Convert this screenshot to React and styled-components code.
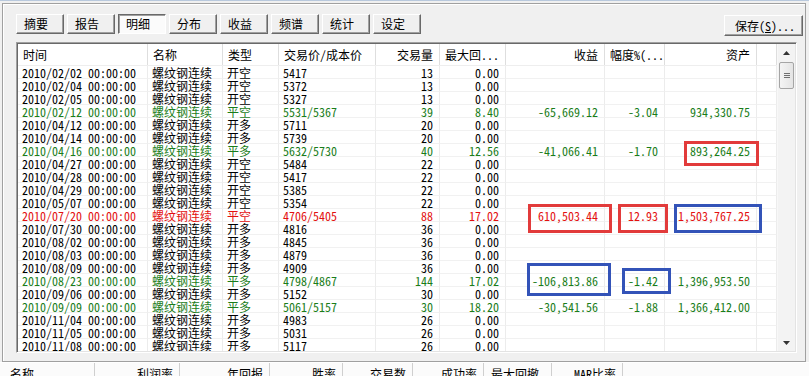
import styled, { createGlobalStyle } from "styled-components";

const GlobalStyle = createGlobalStyle`
  html, body {
    margin: 0;
    padding: 0;
    background: #f0f0f0;
  }
  body {
    font-family: "Noto Sans Mono CJK SC", "Noto Sans CJK SC", monospace;
    font-size: 12px;
    color: #000;
    overflow: hidden;
  }
`;

const TABS = ["摘要", "报告", "明细", "分布", "收益", "频谱", "统计", "设定"];

const COLUMNS = [
  { title: "时间", width: 130, head: "left", cell: "left" },
  { title: "名称", width: 75, head: "left", cell: "left" },
  { title: "类型", width: 56, head: "left", cell: "left" },
  { title: "交易价/成本价", width: 97, head: "left", cell: "left" },
  { title: "交易量", width: 64, head: "right", cell: "right" },
  { title: "最大回...", width: 66, head: "left", cell: "right" },
  { title: "收益", width: 99, head: "right", cell: "right" },
  { title: "幅度%(...", width: 60, head: "left", cell: "right" },
  { title: "资产", width: 92, head: "right", cell: "right" },
];

const GRID = COLUMNS.map((c) => c.width + "px").join(" ") + " 1fr";

const TRADES = [
  ["2010/02/02", "开空", "5417", "13", "0.00"],
  ["2010/02/04", "开空", "5372", "13", "0.00"],
  ["2010/02/05", "开空", "5327", "13", "0.00"],
  ["2010/02/12", "平空", "5531/5367", "39", "8.40", "-65,669.12", "-3.04", "934,330.75", "win"],
  ["2010/04/12", "开多", "5711", "20", "0.00"],
  ["2010/04/14", "开多", "5739", "20", "0.00"],
  ["2010/04/16", "平多", "5632/5730", "40", "12.56", "-41,066.41", "-1.70", "893,264.25", "win"],
  ["2010/04/27", "开空", "5484", "22", "0.00"],
  ["2010/04/28", "开空", "5417", "22", "0.00"],
  ["2010/04/29", "开空", "5385", "22", "0.00"],
  ["2010/05/07", "开空", "5354", "22", "0.00"],
  ["2010/07/20", "平空", "4706/5405", "88", "17.02", "610,503.44", "12.93", "1,503,767.25", "loss"],
  ["2010/07/30", "开多", "4816", "36", "0.00"],
  ["2010/08/02", "开多", "4845", "36", "0.00"],
  ["2010/08/03", "开多", "4879", "36", "0.00"],
  ["2010/08/09", "开多", "4909", "36", "0.00"],
  ["2010/08/23", "平多", "4798/4867", "144", "17.02", "-106,813.86", "-1.42", "1,396,953.50", "win"],
  ["2010/09/06", "开多", "5152", "30", "0.00"],
  ["2010/09/09", "平多", "5061/5157", "30", "18.20", "-30,541.56", "-1.88", "1,366,412.00", "win"],
  ["2010/11/04", "开多", "4983", "26", "0.00"],
  ["2010/11/05", "开多", "5031", "26", "0.00"],
  ["2010/11/08", "开多", "5117", "26", "0.00"],
];

const SUMMARY = [
  { title: "名称", width: 92, align: "left" },
  { title: "利润率", width: 85, align: "right" },
  { title: "年回报", width: 90, align: "right" },
  { title: "胜率", width: 73, align: "right" },
  { title: "交易数", width: 70, align: "right" },
  { title: "成功率", width: 71, align: "right" },
  { title: "最大回撤", width: 68, align: "left" },
  { title: "MAR比率", width: 71, align: "right" },
];

// hand-drawn annotation boxes laid over the list
const MARKS = [
  { color: "red", x: 684, y: 140, w: 75, h: 25 },
  { color: "red", x: 528, y: 203, w: 84, h: 29 },
  { color: "red", x: 618, y: 203, w: 50, h: 29 },
  { color: "blue", x: 674, y: 203, w: 88, h: 29 },
  { color: "blue", x: 527, y: 262, w: 84, h: 33 },
  { color: "blue", x: 622, y: 267, w: 49, h: 26 },
];

const App = () => {
  return (
    <Window>
      <GlobalStyle />
      <Frame>
        <Toolbar>
          {TABS.map((t) => (
            <TabButton key={t} $active={t === "明细"}>
              {t}
            </TabButton>
          ))}
          <SaveButton>
            保存(<u>S</u>)...
          </SaveButton>
        </Toolbar>
        <ListView>
          <ListArea>
            <HeaderRow>
              {COLUMNS.map((c) => (
                <HeaderCell key={c.title} $align={c.head}>
                  {c.title}
                </HeaderCell>
              ))}
              <HeaderCell />
            </HeaderRow>
            {TRADES.map((r) => {
              const cells = [
                r[0] + " 00:00:00",
                "螺纹钢连续",
                r[1],
                r[2],
                r[3],
                r[4],
                r[5] || "",
                r[6] || "",
                r[7] || "",
              ];
              return (
                <Row key={r[0]} $tone={r[8]}>
                  {cells.map((v, i) => (
                    <Cell key={i} $align={COLUMNS[i].cell}>
                      {v}
                    </Cell>
                  ))}
                  <Cell />
                </Row>
              );
            })}
          </ListArea>
          <ScrollBar>
            <Arrow>
              <svg width="7" height="4" viewBox="0 0 7 4">
                <path d="M3.5 0 L7 4 L0 4 Z" fill="#333" />
              </svg>
            </Arrow>
            <Thumb>
              <Grip />
            </Thumb>
            <Track />
            <Arrow>
              <svg width="7" height="4" viewBox="0 0 7 4">
                <path d="M0 0 L7 0 L3.5 4 Z" fill="#333" />
              </svg>
            </Arrow>
          </ScrollBar>
        </ListView>
      </Frame>
      <SummaryHeader>
        {SUMMARY.map((s) => (
          <SummaryCell key={s.title} $w={s.width} $align={s.align}>
            {s.title}
          </SummaryCell>
        ))}
        <SummaryCell $w={0} />
      </SummaryHeader>
      {MARKS.map((m, i) => (
        <Mark
          key={i}
          $color={m.color}
          style={{ left: m.x, top: m.y, width: m.w, height: m.h }}
        />
      ))}
    </Window>
  );
};

export default App;

const Window = styled.div`
  position: relative;
  width: 809px;
  height: 376px;
  overflow: hidden;
  background: #f0f0f0;
  border-top: 1px solid #b9c9dd;
  box-sizing: border-box;
`;

const Frame = styled.div`
  margin: 2px 3px 0 2px;
  height: 359px;
  box-sizing: border-box;
  border: 1px solid #a0a0a0;
  box-shadow: inset 1px 1px #ffffff;
  display: flex;
  flex-direction: column;
`;

const Toolbar = styled.div`
  display: flex;
  align-items: flex-start;
  gap: 3px;
  padding: 10px 2px 0 13px;
  height: 38px;
  box-sizing: border-box;
`;

const TabButton = styled.div`
  width: 48px;
  height: 20px;
  box-sizing: border-box;
  padding-left: 7px;
  line-height: 18px;
  font-size: 12px;
  background: ${(p) => (p.$active ? "#fbfbfb" : "#f0f0f0")};
  border: 1px solid;
  border-color: ${(p) =>
    p.$active ? "#696969 #ffffff #ffffff #696969" : "#ffffff #696969 #696969 #ffffff"};
  box-shadow: ${(p) =>
    p.$active ? "inset 1px 1px #a0a0a0" : "inset -1px -1px #a0a0a0"};
`;

const SaveButton = styled(TabButton)`
  margin-left: auto;
  width: 79px;
  height: 21px;
  padding: 0 0 0 10px;
  margin-top: 1px;
  line-height: 19px;

  u {
    text-decoration-thickness: 1px;
  }
`;

const ListView = styled.div`
  margin-left: 13px;
  width: 781px;
  height: 311px;
  box-sizing: border-box;
  border: 1px solid;
  border-color: #a0a0a0 #ffffff #ffffff #a0a0a0;
  box-shadow: inset 1px 1px #696969, inset -1px -1px #e3e3e3;
  padding: 1px;
  background: #fff;
  display: flex;
`;

const ListArea = styled.div`
  flex: 1;
  overflow: hidden;
`;

const HeaderRow = styled.div`
  display: grid;
  grid-template-columns: ${GRID};
  height: 22px;
  background: #fff;
  border-bottom: 1px solid #eeeeee;
  box-sizing: border-box;
`;

const HeaderCell = styled.div`
  border-right: 1px solid #dedede;
  padding: 0 6px 0 5px;
  line-height: 21px;
  text-align: ${(p) => p.$align || "left"};
  white-space: nowrap;
`;

const TONES = { win: "#1a7d1a", loss: "#e31010" };

const Row = styled.div`
  display: grid;
  grid-template-columns: ${GRID};
  height: 13px;
  color: ${(p) => TONES[p.$tone] || "#000"};
`;

const Cell = styled.div`
  border-right: 1px solid #ececec;
  border-bottom: 1px solid #f1f1f1;
  box-sizing: border-box;
  padding: 0 6px 0 4px;
  line-height: 13px;
  height: 13px;
  text-align: ${(p) => p.$align || "left"};
  white-space: nowrap;
`;

const ScrollBar = styled.div`
  width: 17px;
  display: flex;
  flex-direction: column;
  background: #f3f3f3;
  border-left: 1px solid #f8f8f8;
`;

const Arrow = styled.div`
  height: 17px;
  display: flex;
  align-items: center;
  justify-content: center;
`;

const Thumb = styled.div`
  margin: 1px 1px 0 1px;
  height: 27px;
  box-sizing: border-box;
  border: 1px solid #a5a5a5;
  border-radius: 2px;
  background: linear-gradient(to right, #f4f4f4, #e4e4e4);
  display: flex;
  align-items: center;
  justify-content: center;
`;

const Grip = styled.div`
  width: 6px;
  height: 5px;
  border-top: 1px solid #707070;
  border-bottom: 1px solid #707070;
  box-sizing: border-box;
  position: relative;

  &::after {
    content: "";
    position: absolute;
    left: 0;
    right: 0;
    top: 1px;
    border-top: 1px solid #707070;
  }
`;

const Track = styled.div`
  flex: 1;
`;

const SummaryHeader = styled.div`
  display: flex;
  padding-left: 3px;
  height: 20px;
  border-top: 1px solid #ffffff;
  background: #fbfbfb;
`;

const SummaryCell = styled.div`
  width: ${(p) => p.$w}px;
  flex: ${(p) => (p.$w ? "none" : 1)};
  box-sizing: border-box;
  border-right: ${(p) => (p.$w ? "1px solid #cfcfcf" : "none")};
  padding: 4px 6px 0 7px;
  line-height: 13px;
  text-align: ${(p) => p.$align};
  white-space: nowrap;
`;

const Mark = styled.div`
  position: absolute;
  box-sizing: border-box;
  border: 3px solid ${(p) => (p.$color === "red" ? "#e23b3b" : "#3353b8")};
`;
